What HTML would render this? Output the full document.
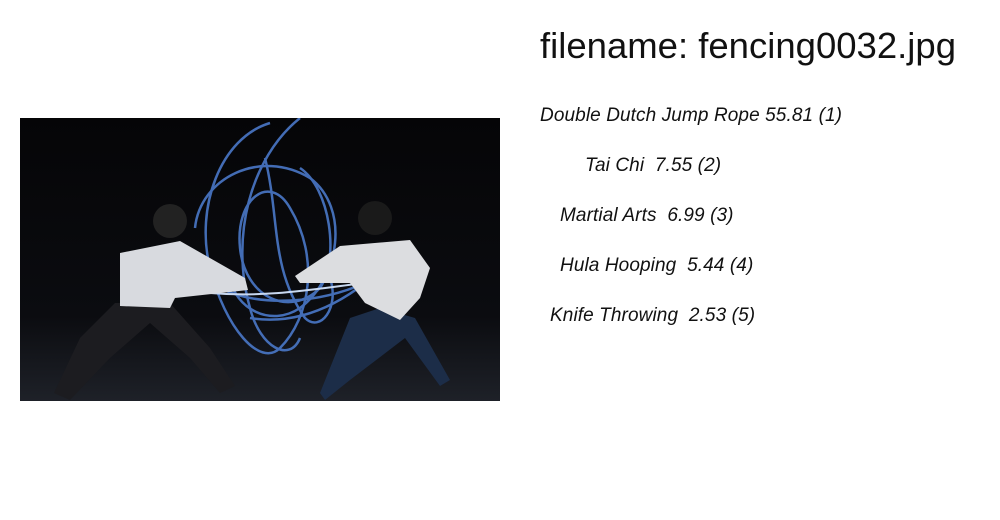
<!DOCTYPE html>
<html><head><style>
body{margin:0;background:#fff;width:1000px;height:520px;position:relative;overflow:hidden;font-family:"Liberation Sans","DejaVu Sans",sans-serif;color:#111}
.t{position:absolute;left:540px;top:25px;font-size:36.5px;white-space:nowrap;letter-spacing:0}
.r{position:absolute;font-size:19px;font-style:italic;white-space:nowrap;letter-spacing:0.1px}
svg{position:absolute;left:20px;top:118px}
</style></head><body>
<svg width="480" height="283" viewBox="0 0 480 283">
<defs><linearGradient id="g" x1="0" y1="0" x2="0" y2="1"><stop offset="0" stop-color="#050507"/><stop offset="0.7" stop-color="#0b0c10"/><stop offset="1" stop-color="#1e2128"/></linearGradient></defs>
<rect width="480" height="283" fill="url(#g)"/>
<g fill="none" stroke="#4a78c8" stroke-width="2.5" opacity="0.9">
<path d="M250 5 C200 20 175 90 190 150 C205 210 240 250 260 230 C290 200 300 140 270 90 C250 55 215 80 220 130 C225 180 270 200 300 170 C320 140 310 70 280 50"/>
<path d="M280 0 C230 40 210 120 230 190 C240 230 270 245 280 220"/>
<path d="M175 110 C180 60 240 30 290 60 C330 90 320 160 280 190 C250 210 215 190 210 160"/>
<path d="M200 170 C240 190 300 185 345 165 C300 200 260 205 230 200"/>
<path d="M245 40 C260 100 250 150 285 200 C300 215 320 190 310 160"/>
</g>
<path d="M190 175 C250 180 300 170 345 165" stroke="#c8d8f0" stroke-width="2" fill="none"/>
<path d="M34 275 L60 220 L95 185 L150 185 L190 230 L215 268 L200 275 L170 240 L130 205 L90 240 L50 282Z" fill="#1c1c20"/>
<path d="M100 135 L160 123 L225 160 L228 172 L155 180 L150 190 L100 188Z" fill="#d8dadf"/>
<circle cx="150" cy="103" r="17" fill="#222"/>
<path d="M300 275 L330 200 L360 190 L395 200 L430 262 L420 268 L385 220 L330 262 L305 282Z" fill="#1c2d48"/>
<path d="M275 158 L320 128 L390 122 L410 150 L400 180 L380 202 L345 185 L330 165 L280 165Z" fill="#dcdde0"/>
<circle cx="355" cy="100" r="17" fill="#1a1a1a"/>
</svg>
<div class="t">filename: fencing0032.jpg</div>
<div class="r" style="left:540px;top:105px">Double Dutch Jump Rope 55.81 (1)</div>
<div class="r" style="left:585px;top:155px">Tai Chi&nbsp; 7.55 (2)</div>
<div class="r" style="left:560px;top:205px">Martial Arts&nbsp; 6.99 (3)</div>
<div class="r" style="left:560px;top:255px">Hula Hooping&nbsp; 5.44 (4)</div>
<div class="r" style="left:550px;top:305px">Knife Throwing&nbsp; 2.53 (5)</div>
</body></html>
